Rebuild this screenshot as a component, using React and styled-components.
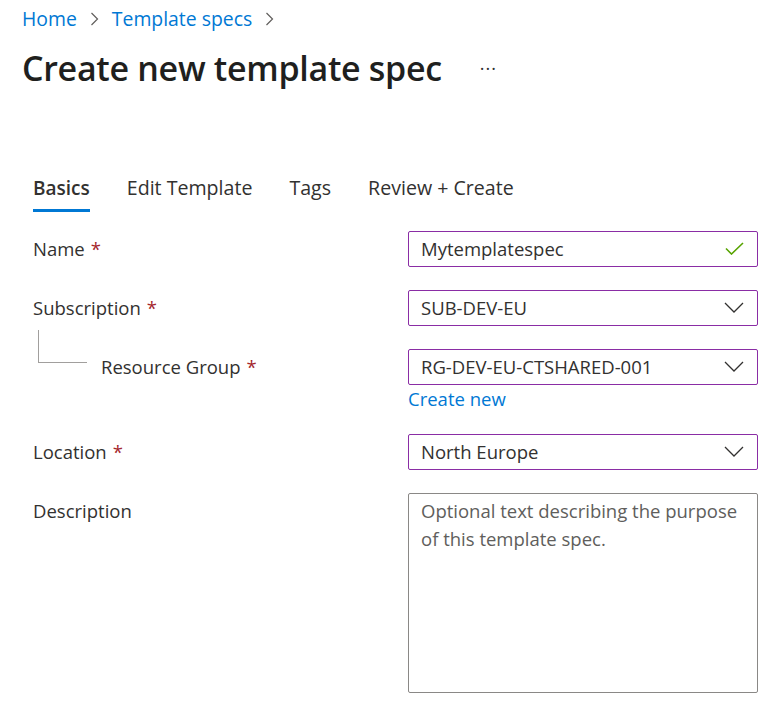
import styled, { createGlobalStyle } from "styled-components";

const GlobalStyle = createGlobalStyle`
  body {
    margin: 0;
    background: #fff;
    color: #323130;
    font-family: "Open Sans", "Noto Sans", sans-serif;
  }
`;

const ChevronDown = () => (
  <svg width="20" height="11" viewBox="0 0 20 11" fill="none">
    <path d="M1 1 L10 10 L19 1" stroke="#323130" strokeWidth="1.3" />
  </svg>
);

const Check = () => (
  <svg width="19" height="13" viewBox="0 0 19 13" fill="none">
    <path d="M1 6.5 L6.5 12 L18 1" stroke="#57a300" strokeWidth="1.6" />
  </svg>
);

const BreadChevron = () => (
  <svg width="9" height="14" viewBox="0 0 9 14" fill="none">
    <path d="M1.5 1 L7.5 7 L1.5 13" stroke="#605e5c" strokeWidth="1.2" />
  </svg>
);

const tabs = ["Basics", "Edit Template", "Tags", "Review + Create"];

const App = () => {
  return (
    <Page>
      <GlobalStyle />
      <Breadcrumb>
        <Crumb>Home</Crumb>
        <BreadChevron />
        <Crumb>Template specs</Crumb>
        <BreadChevron />
      </Breadcrumb>

      <TitleRow>
        <Title>Create new template spec</Title>
        <More>···</More>
      </TitleRow>

      <Form>
        <Tabs>
          {tabs.map((t, i) => (
            <Tab key={t} active={i === 0}>
              {t}
            </Tab>
          ))}
        </Tabs>

        <Grid>
          <LabelCell>
            Name<Required>*</Required>
          </LabelCell>
          <FieldCell>
            <Field>
              Mytemplatespec
              <Check />
            </Field>
          </FieldCell>

          <LabelCell>
            Subscription<Required>*</Required>
          </LabelCell>
          <FieldCell>
            <Field>
              SUB-DEV-EU
              <ChevronDown />
            </Field>
          </FieldCell>

          <LabelCell>
            <Connector />
            <Indented>
              Resource Group<Required>*</Required>
            </Indented>
          </LabelCell>
          <FieldCell>
            <Field>
              RG-DEV-EU-CTSHARED-001
              <ChevronDown />
            </Field>
            <Link>Create new</Link>
          </FieldCell>

          <LabelCell>
            Location<Required>*</Required>
          </LabelCell>
          <FieldCell>
            <Field>
              North Europe
              <ChevronDown />
            </Field>
          </FieldCell>

          <LabelCell>Description</LabelCell>
          <FieldCell>
            <TextArea placeholder="Optional text describing the purpose of this template spec." />
          </FieldCell>
        </Grid>
      </Form>
    </Page>
  );
};

const Page = styled.div`
  padding: 7px 22px 0;
`;

const Breadcrumb = styled.div`
  display: flex;
  align-items: center;
  gap: 13px;
  height: 24px;
  font-size: 19.4px;
`;

const Crumb = styled.span`
  color: #0078d4;
  line-height: 24px;
`;

const TitleRow = styled.div`
  display: flex;
  align-items: center;
  gap: 38px;
  margin-top: 15px;
`;

const Title = styled.h1`
  margin: 0;
  font-size: 34px;
  line-height: 44px;
  font-weight: 600;
  letter-spacing: -0.3px;
  color: #201f1e;
`;

const More = styled.span`
  font-size: 18px;
  color: #323130;
  letter-spacing: 1px;
`;

const Form = styled.div`
  padding-left: 11px;
  margin-top: 86px;
`;

const Tabs = styled.div`
  display: flex;
  gap: 37px;
`;

const Tab = styled.div`
  font-size: ${(p) => (p.active ? "19px" : "19.6px")};
  line-height: 24px;
  padding-bottom: 9px;
  border-bottom: 3px solid ${(p) => (p.active ? "#0078d4" : "transparent")};
  font-weight: ${(p) => (p.active ? 600 : 400)};
  color: #323130;
`;

const Grid = styled.div`
  display: grid;
  grid-template-columns: 375px 350px;
  row-gap: 23px;
  margin-top: 19px;
`;

const LabelCell = styled.div`
  display: flex;
  align-items: flex-start;
  font-size: 18.5px;
  line-height: 24px;
  padding-top: 6px;
`;

const Required = styled.span`
  color: #a4262c;
  margin-left: 6px;
`;

const Connector = styled.div`
  width: 49px;
  height: 33px;
  margin: -25px 0 0 5px;
  border-left: 1px solid #a19f9d;
  border-bottom: 1px solid #a19f9d;
  box-sizing: border-box;
  flex-shrink: 0;
`;

const Indented = styled.span`
  margin-left: 14px;
`;

const FieldCell = styled.div`
  display: flex;
  flex-direction: column;
`;

const Field = styled.div`
  box-sizing: border-box;
  height: 36px;
  display: flex;
  align-items: center;
  justify-content: space-between;
  padding: 0 13px 2px 12px;
  border: 1px solid #8a2da5;
  border-radius: 2px;
  font-size: 18.5px;
  color: #323130;
`;

const Link = styled.span`
  color: #0078d4;
  font-size: 18.5px;
  line-height: 24px;
  margin-top: 2px;
`;

const TextArea = styled.textarea`
  box-sizing: border-box;
  height: 200px;
  width: 100%;
  resize: none;
  padding: 3px 12px;
  border: 1px solid #8a8886;
  border-radius: 2px;
  font-family: inherit;
  font-size: 18.5px;
  line-height: 28px;
  color: #323130;
  &::placeholder {
    color: #605e5c;
  }
`;

export default App;
